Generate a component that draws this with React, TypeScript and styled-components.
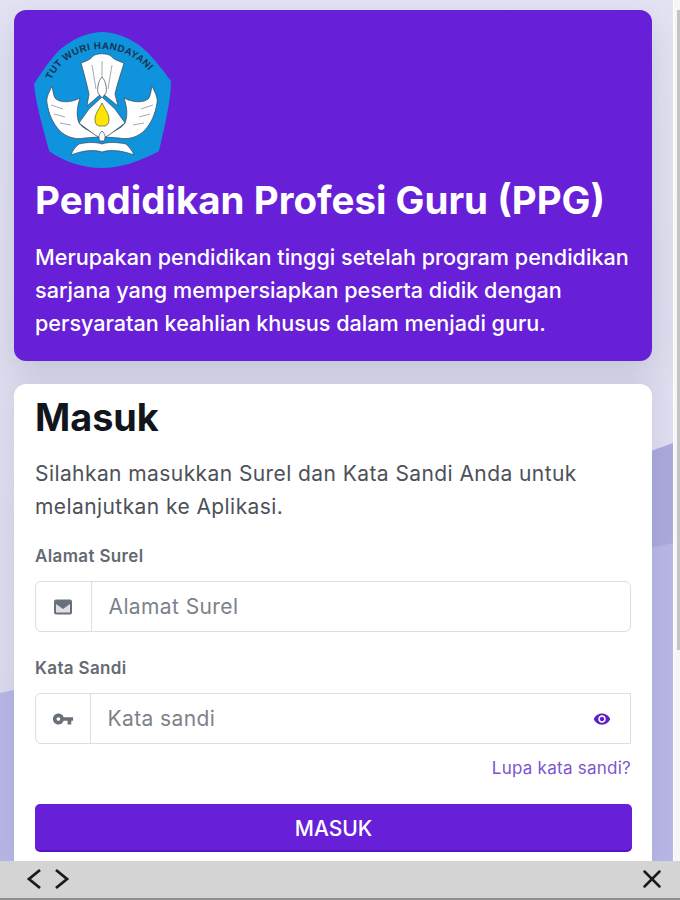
import React from "react";
import styled, { createGlobalStyle } from "styled-components";
import { MdVpnKey, MdRemoveRedEye } from "react-icons/md";
import { X } from "lucide-react";

const Global = createGlobalStyle`
  html, body { margin: 0; padding: 0; height: 100%; overflow: hidden; }
  body { font-family: Inter, "Noto Sans", sans-serif; }
  * { box-sizing: border-box; }
`;
const Frame = styled.div`
  width: 680px; height: 900px; display: flex; flex-direction: column; overflow: hidden; background: #fff;
`;
const Viewport = styled.div`
  height: 861px; display: flex; flex: none; overflow: hidden;
`;
const Stage = styled.main`
  position: relative; width: 673px; height: 861px; flex: none; overflow: hidden;
  background: linear-gradient(180deg, #e3e3f4 0%, #dcdcee 60%, #d9d9ea 100%);
  padding: 10px 21px 0 14px; display: flex; flex-direction: column; gap: 23px;
`;
const Waves = styled.svg`
  position: absolute; inset: 0; width: 673px; height: 861px;
`;
const ScrollTrack = styled.div`
  width: 7px; flex: none; background: #f6f6f6; padding: 10px 0 211px 3px; border-left: 1px solid #fff;
`;
const ScrollThumb = styled.div`
  height: 100%; background: #c4c4c4;
`;
const Hero = styled.section`
  position: relative; flex: none; height: 351px; border-radius: 12px; background: #681fd8; color: #fff;
  padding: 20px 21px 0; box-shadow: 0 14px 34px rgba(60, 60, 90, 0.16);
`;
const Logo = styled.svg`
  display: block; width: 141px; height: 140px; margin-left: -3px;
`;
const HeroTitle = styled.h1`
  margin: 8px 0 0; font-size: 38.5px; line-height: 44px; font-weight: 700; white-space: nowrap;
`;
const HeroText = styled.p`
  margin: 19px 0 0; font-size: 21.6px; line-height: 33px; font-weight: 500; white-space: nowrap;
`;
const Card = styled.section`
  position: relative; flex: 1; border-radius: 12px 12px 0 0; background: #fff; padding: 10px 21px 0;
  box-shadow: 0 4px 24px rgba(60, 60, 90, 0.1);
`;
const Title = styled.h2`
  margin: 0; font-size: 37.8px; line-height: 46px; font-weight: 700; color: #11151c;
`;
const Lead = styled.p`
  margin: 17px 0 0; font-size: 21px; line-height: 33px; color: #4d5159; letter-spacing: 0.42px;
`;
const Label = styled.label<{ $top: number }>`
  display: block; margin-top: ${(p) => p.$top}px; font-size: 17px; line-height: 22px; font-weight: 600; color: #646a73; letter-spacing: 0.35px;
`;
const Field = styled.div<{ $square?: boolean }>`
  display: flex; align-items: stretch; height: 51px; margin-top: 14px; border: 1.5px solid #dedede;
  border-radius: ${(p) => (p.$square ? "6px 0 0 6px" : "6px")}; background: #fff;
`;
const Addon = styled.div<{ $w: number }>`
  flex: none; width: ${(p) => p.$w}px; display: flex; align-items: center; justify-content: center;
  border-right: 1.5px solid #dedede; color: #6a7079;
`;
const Placeholder = styled.span`
  flex: 1; display: flex; align-items: center; padding-left: 17px; font-size: 21px; color: #7d828a; letter-spacing: 0.4px;
`;
const EyeSlot = styled.div`
  flex: none; width: 56px; display: flex; align-items: center; justify-content: center; color: #5e1fc4;
`;
const Forgot = styled.a`
  display: block; margin-top: 13px; text-align: right; font-size: 17px; line-height: 22px; color: #7c55cf; letter-spacing: 0.25px;
`;
const Submit = styled.button`
  display: block; width: calc(100% + 1px); height: 48px; margin-top: 25px; border: 0; border-bottom: 2px solid #5a12c9; border-radius: 5px;
  background: #681fd8; color: #fff; font: 500 21px/50px Inter, sans-serif; padding: 0;
`;
const BottomBar = styled.footer`
  height: 39px; flex: none; background: #d4d4d4; display: flex; align-items: center; justify-content: space-between;
  padding: 0 13px 2px 26px; color: #1a1a1a; border-bottom: 2px solid #8f8f8f;
`;
const NavGroup = styled.div`
  display: flex; gap: 12px;
`;
const Chevron = styled.svg`
  display: block; width: 16px; height: 22px; fill: none; stroke: #1a1a1a; stroke-width: 2.8;
`;
const MailIcon = () => (
  <svg width="20" height="16" viewBox="0 0 20 16">
    <rect x="1" y="0.5" width="18" height="15" rx="2" fill="#6a7079" />
    <rect x="3" y="2.5" width="14" height="11" fill="#dfe0e3" />
    <path d="M3 2 H17 V5 L10 10 L3 5 Z" fill="#6a7079" />
  </svg>
);
const Emblem = () => (
  <Logo viewBox="33 29 141 140">
    <path fill="#0f93dc" d="M103 31 C115 31 128 36 140 44 C152 53 163 68 172 80 C172 100 165 128 160 150 C140 161 120 167 103 167 C85 167 65 161 50 150 C45 130 37 105 35 83 C45 68 55 52 67 44 C78 36 92 31 103 31Z" />
    <defs>
      <path id="arc" d="M52 79 C62 58 82 48 103 48 C125 48 146 60 157 80" />
    </defs>
    <text fontFamily="Liberation Sans, sans-serif" fontSize="9.8" fontWeight="700" fill="#16324f" letterSpacing="0.5">
      <textPath href="#arc" startOffset="0">TUT WURI HANDAYANI</textPath>
    </text>
    <g fill="#fff" stroke="#3a4650" strokeWidth="0.7" strokeLinejoin="round">
      <path d="M53 85 C50 92 47 96 48 102 C50 114 54 122 60 129 C67 136 76 139 86 137 L100 136 C92 130 84 128 80 122 C77 114 78 106 81 97 C72 102 60 102 56 97 C54 93 54 89 53 85Z" />
      <path d="M153 85 C156 92 159 96 158 102 C156 114 152 122 146 129 C139 136 130 139 120 137 L106 136 C114 130 122 128 126 122 C129 114 128 106 125 97 C134 102 146 102 150 97 C152 93 152 89 153 85Z" />
      <path d="M82 62 C88 60 92 58 94 55 C98 52 108 52 112 55 C114 58 119 60 125 62 C122 72 118 84 116 93 L119 105 L103 92 L88 105 L90 93 C88 84 85 72 82 62Z" />
      <path d="M103 76 C99 80 98 88 99 92 L103 97 L107 92 C108 88 107 80 103 76Z" />
      <path d="M80 122 L90 108 L103 96 L116 108 L126 122 L110 134 L103 138 L96 134Z" />
      <path d="M103 130 C100 133 99 136 101 140 L105 140 C107 136 106 133 103 130Z" />
      <path d="M72 154 C74 149 76 146 80 143 C88 141 98 141 103 143 C108 141 118 141 127 143 C130 146 133 149 135 154 C125 150 112 148 103 151 C94 148 82 150 72 154Z" />
    </g>
    <path fill="#ffe600" stroke="#3a3a1a" strokeWidth="0.6" d="M103 102 C100 108 96 113 96 118 C96 122 97 124 100 125 L106 125 C109 124 110 122 110 118 C110 113 106 108 103 102Z" />
    <g stroke="#7a8790" strokeWidth="0.7" fill="none">
      <path d="M52 104 L64 108 M55 113 L66 116 M61 122 L72 124 M154 104 L142 108 M151 113 L140 116 M145 122 L134 124" />
      <path d="M93 64 L97 88 M103 60 V76 M113 64 L109 88" />
    </g>
  </Logo>
);

export default function App() {
  return (
    <Frame>
      <Global />
      <Viewport>
        <Stage>
          <Waves viewBox="0 0 673 861">
            <path fill="#aba8dc" d="M0 760 C200 720 450 520 673 443 V861 H0 Z" />
            <path fill="#b8b6e6" d="M0 693 C200 650 450 590 673 543 V861 H0 Z" />
          </Waves>
          <Hero>
            <Emblem />
            <HeroTitle>Pendidikan Profesi Guru (PPG)</HeroTitle>
            <HeroText>
              Merupakan pendidikan tinggi setelah program pendidikan<br />
              sarjana yang mempersiapkan peserta didik dengan<br />
              persyaratan keahlian khusus dalam menjadi guru.
            </HeroText>
          </Hero>
          <Card>
            <Title>Masuk</Title>
            <Lead>Silahkan masukkan Surel dan Kata Sandi Anda untuk melanjutkan ke Aplikasi.</Lead>
            <Label $top={22}>Alamat Surel</Label>
            <Field>
              <Addon $w={55.5}><MailIcon /></Addon>
              <Placeholder>Alamat Surel</Placeholder>
            </Field>
            <Label $top={25}>Kata Sandi</Label>
            <Field $square>
              <Addon $w={54.5}><MdVpnKey size={22} /></Addon>
              <Placeholder>Kata sandi</Placeholder>
              <EyeSlot><MdRemoveRedEye size={18} /></EyeSlot>
            </Field>
            <Forgot>Lupa kata sandi?</Forgot>
            <Submit>MASUK</Submit>
          </Card>
        </Stage>
        <ScrollTrack><ScrollThumb /></ScrollTrack>
      </Viewport>
      <BottomBar>
        <NavGroup>
          <Chevron viewBox="0 0 16 22"><path d="M14 2 L3 11 L14 20" /></Chevron>
          <Chevron viewBox="0 0 16 22"><path d="M2 2 L13 11 L2 20" /></Chevron>
        </NavGroup>
        <X size={30} strokeWidth={2} />
      </BottomBar>
    </Frame>
  );
}
